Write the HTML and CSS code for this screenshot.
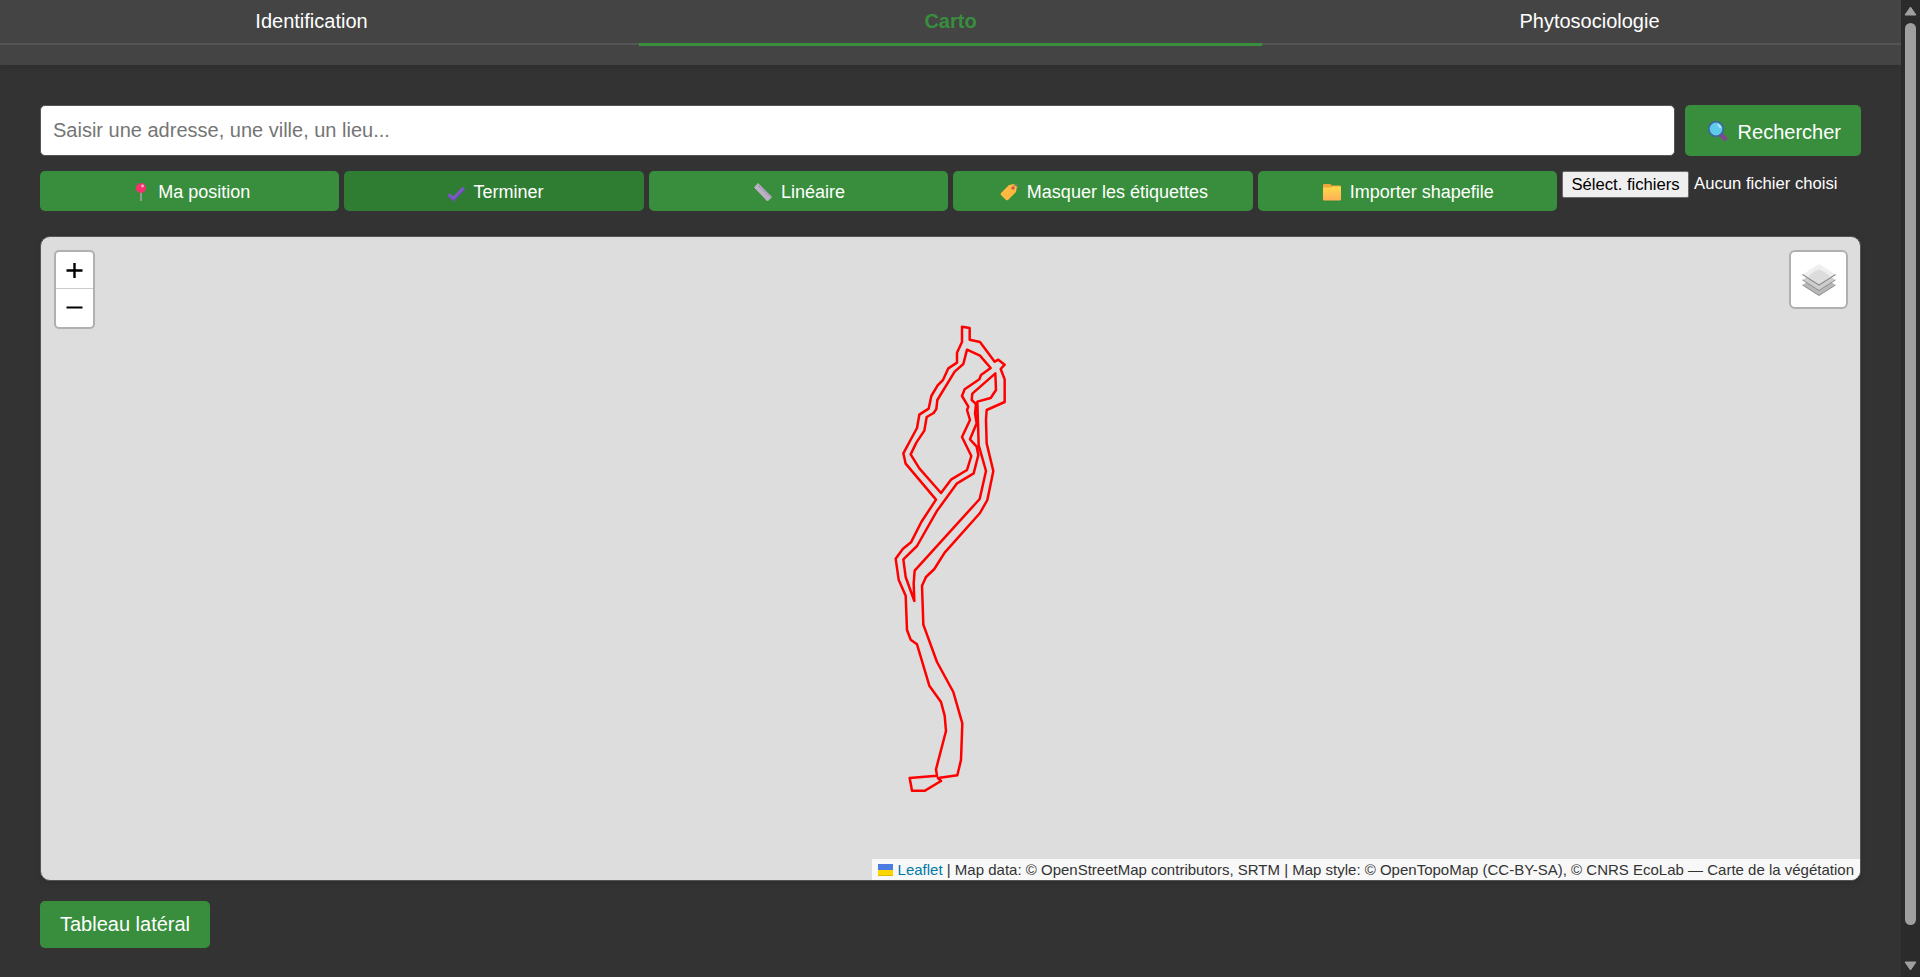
FILE: index.html
```
<!DOCTYPE html>
<html lang="fr">
<head>
<meta charset="utf-8">
<title>Carto</title>
<link rel="stylesheet" href="styles.css">
</head>
<body>
<div class="page">
  <header class="header">
    <nav class="tabs">
      <a class="tab">Identification</a>
      <a class="tab tab-active">Carto</a>
      <a class="tab">Phytosociologie</a>
    </nav>
  </header>
  <main class="content">
    <div class="search">
      <input class="search-input" type="text" placeholder="Saisir une adresse, une ville, un lieu...">
      <button class="btn search-btn">
        <svg class="search-icon" viewBox="0 0 22 24"><path d="M13.500 14.500l4.500 4" stroke="#83478f" stroke-width="4.500" stroke-linecap="round"/><circle cx="9" cy="9" r="7.200" fill="#5fcbea" stroke="#3f62a0" stroke-width="1.600"/><path d="M10.500 4.500q2.500 1 3 3.500" fill="none" stroke="#b9ecfa" stroke-width="1.800"/></svg>
        <span>Rechercher</span>
      </button>
    </div>
    <div class="tools">
      <button class="btn tool"><svg class="icon" viewBox="0 0 20 20"><path d="M11 9v10" stroke="#a9a3ae" stroke-width="1.500"/><circle cx="11" cy="6" r="5" fill="#f8306d"/><circle cx="12.500" cy="4" r="1.400" fill="#ffb1cd"/></svg><span>Ma position</span></button>
      <button class="btn tool tool-on"><svg class="icon" viewBox="0 0 20 20"><path d="M2.500 12.500l5 4.500L18 6" fill="none" stroke="#8057d0" stroke-width="3.600"/><path d="M2.500 14l5 4.500L18.500 7" fill="none" stroke="#6545a8" stroke-width="1"/></svg><span>Terminer</span></button>
      <button class="btn tool"><svg class="icon" viewBox="0 0 20 20"><path d="M5 1.500L18.500 15 14.500 19 1.500 5.500Z" fill="#bbb2c4" stroke="#bbb2c4" stroke-linejoin="round"/><path d="M6 4l11 11" stroke="#9a78c9" stroke-width="1.500" stroke-dasharray="1 1.500"/></svg><span>Linéaire</span></button>
      <button class="btn tool"><svg class="icon" viewBox="0 0 20 20"><path d="M10 3l5-1 3 3-1 5-8 8q-1 .7-2 0l-5-5q-.7-1 0-2Z" fill="#ffb840"/><path d="M14 6q1-4 4-3.500 2 1 0 4.500" fill="none" stroke="#807b70" stroke-width="1"/><circle cx="14" cy="6" r="1.500" fill="#a75946" stroke="#f47b50"/></svg><span>Masquer les étiquettes</span></button>
      <button class="btn tool"><svg class="icon" viewBox="0 0 20 20"><defs><linearGradient id="folder" x2="0" y2="1"><stop stop-color="#ffda4b"/><stop offset="1" stop-color="#ffae55"/></linearGradient></defs><path d="M1 3q0-1 1-1h6l2 1.500h8q1 0 1 1v13H1Z" fill="#f0a83d"/><path d="M1 5.500h8l2-1h7q1 0 1 1V17.500q0 1-1 1H2q-1 0-1-1Z" fill="url(#folder)"/></svg><span>Importer shapefile</span></button>
      <div class="file"><button class="file-btn">Sélect. fichiers</button><span>Aucun fichier choisi</span></div>
    </div>
    <section class="map">
      <svg class="track" width="180" height="490" viewBox="0 0 540 1470">
        <path d="M306 50L329 54V89L360 96 404 155 415 149 434 164 422 177 434 208V276L380 300 378 330 380 400 400 483 382 570 360 609 254 728 223 777 198 801 186 827 190 944 231 1056 280 1146 307 1240 303 1350 292 1396 234 1404 243 1413 195 1442H156L149 1404 231 1397 228 1378 258 1263 254 1217 243 1176 208 1127 171 1003 152 989 141 960 137 857 116 809 107 746 129 716 153 697 184 636 228 569 137 461 130 430 171 354 178 314 206 296 214 258 233 226 249 210 265 175 291 158V128L306 96Z"/>
        <path d="M321 119L360 137 392 174 363 195 358 208 314 238 306 258 325 290 321 300 330 330 306 381 334 438 321 480 273 509 243 549 178 475 152 433 169 398 193 362 200 321 221 309 229 297 232 270 284 185 310 162Z"/>
        <path d="M406 190L408 240 392 264 352 275 356 405 378 483 359 567 164 782 161 820 163 873 137 801 130 748 171 708 230 604 290 521 341 490 355 435 350 410 330 388 350 340 345 310 348 283 343 277 335 270 337 251Z"/>
      </svg>
      <div class="zoom">
        <a class="zoom-btn" aria-label="Zoom avant"><svg width="17" height="17" viewBox="0 0 17 17"><path d="M.5 8.500h16M8.500 1v15" stroke="#000" stroke-width="2.400"/></svg></a>
        <a class="zoom-btn" aria-label="Zoom arrière"><svg width="17" height="17" viewBox="0 0 17 17"><path d="M.5 8.500h16" stroke="#000" stroke-width="2.200"/></svg></a>
      </div>
      <div class="layers">
        <svg width="34" height="34" viewBox="0 0 34 34"><path d="M.5 22L17 11.500 33.500 22 17 32.500Z" fill="#b8b8b8"/><path d="M.5 22L17 32.500 33.500 22" fill="none" stroke="#8c8c8c"/><path d="M.5 17L17 6.500 33.500 17 17 27.500Z" fill="#cecece"/><path d="M.5 17L17 27.500 33.500 17" fill="none" stroke="#8c8c8c"/><path d="M.5 11.500L17 1 33.500 11.500 17 22Z" fill="#efefef"/><path d="M6 13.500Q12 8 17 6.500 22 8 28 13.500L17 21Z" fill="#dcdcdc"/><path d="M.5 11.500L17 22 33.500 11.500" fill="none" stroke="#8c8c8c" stroke-width="1.200"/></svg>
      </div>
      <div class="credit"><svg class="flag" width="15" height="12" viewBox="0 0 15 12"><path fill="#4c7be1" d="M0 0h15v6H0z"/><path fill="#ffd500" d="M0 6h15v5H0z"/><path fill="#e0bc00" d="M0 11h15v1H0z"/></svg> <a class="credit-link">Leaflet</a> | Map data: © OpenStreetMap contributors, SRTM | Map style: © OpenTopoMap (CC-BY-SA), © CNRS EcoLab — Carte de la végétation</div>
    </section>
    <button class="btn panel-btn">Tableau latéral</button>
  </main>
</div>
<aside class="scroll">
  <svg width="13" height="10" viewBox="0 0 13 10"><path d="M6.500 1L12 9H1Z" fill="#9f9f9f" stroke="#9f9f9f" stroke-linejoin="round"/></svg>
  <div class="thumb"></div>
  <svg class="scroll-down" width="13" height="10" viewBox="0 0 13 10"><path d="M6.500 9L1 1h11Z" fill="#9f9f9f" stroke="#9f9f9f" stroke-linejoin="round"/></svg>
</aside>
</body>
</html>
```
FILE: styles.css
```
* { box-sizing: border-box; }
body {
  margin: 0;
  height: 977px;
  display: flex;
  overflow: hidden;
  background: #333;
  color: #fff;
  font-family: "Liberation Sans", Arial, sans-serif;
  font-size: 20px;
}
.page { flex: 1; }
.header {
  height: 65px;
  background: #444;
  box-shadow: 0 2px 5px rgba(0, 0, 0, .1);
}
.tabs {
  display: flex;
  gap: 16px;
  height: 45px;
  border-bottom: 2px solid #555;
}
.tab {
  flex: 1;
  height: 46px;
  padding-top: 10px;
  line-height: 23px;
  text-align: center;
  border-bottom: 3px solid transparent;
}
.tab-active {
  color: #388e3c;
  font-weight: bold;
  border-bottom-color: #388e3c;
}
.content { padding: 40px 40px 0; }
.btn {
  border: 0;
  border-radius: 5px;
  background: #388e3c;
  color: #fff;
  font: inherit;
}
.search { display: flex; gap: 10px; height: 51px; }
.search-input {
  flex: 1;
  padding: 0 12px;
  border: 1px solid #555;
  border-radius: 5px;
  background: #fff;
  font: inherit;
}
.search-input::placeholder { color: #757575; }
.search-btn {
  width: 176px;
  padding: 3px 20px 0 22px;
  display: flex;
  align-items: center;
  justify-content: space-between;
}
.search-icon { width: 22px; height: 24px; }
.tools {
  display: flex;
  gap: 5px;
  height: 40px;
  margin-top: 15px;
}
.tool {
  flex: 1;
  display: flex;
  align-items: center;
  justify-content: center;
  gap: 8px;
  padding: 1px 0 0 1px;
  font-size: 18px;
}
.tool span { padding-top: 1px; }
.tool-on { background: #2e7d32; }
.icon { width: 20px; height: 20px; }
.file {
  width: 299px;
  display: flex;
  align-items: flex-start;
  gap: 5px;
  font-size: 16.667px;
  line-height: 25px;
}
.file-btn {
  width: 127px;
  height: 27px;
  padding: 0 0 1px;
  border: 1px solid #6b6b6b;
  border-radius: 2px;
  background: #efefef;
  color: #000;
  font: inherit;
  line-height: 23px;
}
.map {
  position: relative;
  height: 645px;
  margin-top: 25px;
  border: 1px solid #555;
  border-radius: 10px;
  background: #ddd;
  overflow: hidden;
  box-shadow: 0 2px 6px rgba(0, 0, 0, .12);
}
.track {
  position: absolute;
  left: 819px;
  top: 73px;
  fill: none;
  stroke: #f00;
  stroke-width: 7.5;
  stroke-linecap: round;
  stroke-linejoin: round;
}
.zoom {
  position: absolute;
  left: 13px;
  top: 13px;
  width: 41px;
  height: 79px;
  border: 2px solid #b0b0b0;
  border-radius: 5px;
  background: #fff;
  overflow: hidden;
}
.zoom-btn {
  display: flex;
  align-items: center;
  justify-content: center;
  height: 37px;
}
.zoom-btn:first-child { border-bottom: 1px solid #ccc; }
.layers {
  position: absolute;
  right: 12px;
  top: 13px;
  width: 59px;
  height: 59px;
  display: flex;
  align-items: center;
  justify-content: center;
  border: 2px solid #b0b0b0;
  border-radius: 6px;
  background: #fff;
}
.credit {
  position: absolute;
  right: 0;
  bottom: 0;
  height: 21px;
  padding: 0 6px;
  background: rgba(255, 255, 255, .8);
  color: #333;
  font-size: 15px;
  line-height: 21px;
  white-space: nowrap;
}
.flag { vertical-align: -1px; }
.credit-link { color: #0078a8; }
.panel-btn {
  display: block;
  width: 170px;
  height: 47px;
  margin-top: 20px;
  padding: 0;
}
.scroll {
  width: 19px;
  padding: 6px 0;
  display: flex;
  flex-direction: column;
  align-items: center;
  background: #2b2b2b;
}
.thumb {
  width: 11px;
  height: 902px;
  margin-top: 7px;
  border-radius: 6px;
  background: #9f9f9f;
}
.scroll-down { margin-top: auto; }
```
